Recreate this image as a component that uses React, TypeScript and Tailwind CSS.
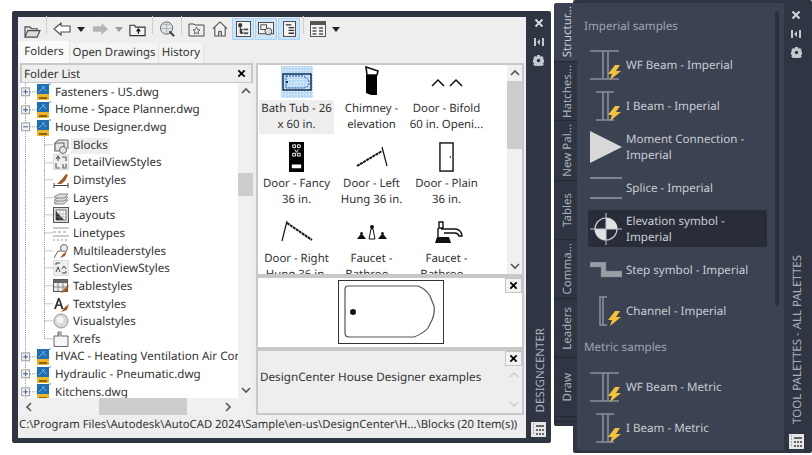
import React from "react";

const font = "font-['Noto_Sans','Open_Sans',sans-serif] [text-rendering:geometricPrecision]";

function CloseX({ className = "" }: { className?: string }) {
  return (
    <svg viewBox="0 0 10 10" className={className}>
      <path d="M1.5 1.5 8.5 8.5M8.5 1.5 1.5 8.5" stroke="currentColor" strokeWidth="2" />
    </svg>
  );
}

function Chevron({ dir, color = "#555" }: { dir: "up" | "down" | "left" | "right"; color?: string }) {
  const d = {
    up: "M1 7 5 3 9 7",
    down: "M1 3 5 7 9 3",
    left: "M7 1 3 5 7 9",
    right: "M3 1 7 5 3 9",
  }[dir];
  return (
    <svg viewBox="0 0 10 10" className="w-[10px] h-[10px]">
      <path d={d} fill="none" stroke={color} strokeWidth="1.6" />
    </svg>
  );
}

function Caret({ color = "#222" }: { color?: string }) {
  return (
    <svg viewBox="0 0 8 5" className="w-[8px] h-[5px] shrink-0">
      <path d="M0 0h8L4 5z" fill={color} />
    </svg>
  );
}

function Sep() {
  return <div className="w-px h-[18px] bg-[#d0d0d0] -mt-2" />;
}

function ToolBtn({ children, on = false }: { children: React.ReactNode; on?: boolean }) {
  return (
    <div className={"w-[22px] h-[22px] flex items-center justify-center shrink-0 " + (on ? "bg-[#cde4f9] border border-[#a8d2f5]" : "")}>
      {children}
    </div>
  );
}

function Toolbar() {
  const s = "#4a4a4a";
  return (
    <div className="h-[24px] flex items-center pl-[6px] shrink-0">
      <svg viewBox="0 0 18 16" className="w-[17px] h-[15px] mt-1">
        <path d="M1 14V3h5l2 2h6v2M1 14l3-7h13l-3 7z" fill="#ddd" stroke={s} strokeWidth="1.2" />
      </svg>
      <div className="w-[5px]" />
      <Sep />
      <div className="w-[6px]" />
      <svg viewBox="0 0 18 14" className="w-[18px] h-[14px]">
        <path d="M1 7 8 1v3h9v6H8v3z" fill="#fff" stroke={s} strokeWidth="1.1" />
      </svg>
      <div className="w-[6px]" />
      <Caret />
      <div className="w-[7px]" />
      <svg viewBox="0 0 18 14" className="w-[17px] h-[14px]">
        <path d="M17 7 10 1v3H1v6h9v3z" fill="#b4b4b4" />
      </svg>
      <div className="w-[6px]" />
      <Caret color="#999" />
      <div className="w-[6px]" />
      <svg viewBox="0 0 18 14" className="w-[17px] h-[14px] mt-[2px]">
        <path d="M1 13V2h5l1 2h10v9z" fill="#f4f4f4" stroke="#333" strokeWidth="1.2" />
        <path d="M10 11V7M8 8.5 10 6l2 2.5" fill="none" stroke="#111" strokeWidth="1.3" />
      </svg>
      <div className="w-[6px]" />
      <Sep />
      <div className="w-[6px]" />
      <svg viewBox="0 0 18 18" className="w-[17px] h-[17px]">
        <circle cx="8" cy="7.5" r="6.500" fill="#dfe5e8" stroke="#666" />
        <path d="M4 4h8M2.500 8h11M8 1.500v12" stroke="#999" strokeWidth=".7" />
        <path d="M11 11l5 5" stroke="#333" strokeWidth="2" />
      </svg>
      <div className="w-[5px]" />
      <Sep />
      <div className="w-[6px]" />
      <svg viewBox="0 0 17 15" className="w-[17px] h-[15px]">
        <path d="M1 14V2h5l1 1h9v11z" fill="#eee" stroke={s} />
        <path d="M8.5 5 9.6 7.5 12 8 10 9.5 10.6 12 8.5 10.6 6.4 12 7 9.5 5 8 7.4 7.5z" fill="none" stroke={s} strokeWidth=".8" />
      </svg>
      <div className="w-[7px]" />
      <svg viewBox="0 0 17 17" className="w-[16px] h-[16px]">
        <path d="M1 8 8.5 1 16 8M3 7v9h11V7" fill="#f2f2f2" stroke={s} strokeWidth="1.1" />
        <path d="M7 16v-5h3v5" fill="#ccc" stroke={s} />
      </svg>
      <div className="w-[4px]" />
      <ToolBtn on>
        <svg viewBox="0 0 16 17" className="w-[15px] h-[16px]">
          <rect x=".5" y=".5" width="15" height="16" fill="#f4f4f4" stroke="#444" />
          <path d="M3 3h3v3H3zM4.5 6v7h3M4.5 9h3" fill="#333" stroke="#333" />
          <rect x="8" y="8" width="5" height="2" fill="#555" />
          <rect x="8" y="12" width="5" height="2" fill="#555" />
        </svg>
      </ToolBtn>
      <div className="w-[1px]" />
      <ToolBtn on>
        <svg viewBox="0 0 17 16" className="w-[16px] h-[15px]">
          <rect x=".5" y=".5" width="16" height="12" fill="#f4f4f4" stroke="#444" />
          <rect x="3" y="3" width="6" height="5" fill="none" stroke="#444" />
          <circle cx="11" cy="10" r="3.6" fill="#ddd" stroke="#444" />
        </svg>
      </ToolBtn>
      <div className="w-[1px]" />
      <ToolBtn on>
        <svg viewBox="0 0 14 17" className="w-[13px] h-[16px]">
          <rect x=".5" y=".5" width="13" height="16" fill="#f4f4f4" stroke="#444" />
          <path d="M3 4h6M6 7h6M6 10h6M6 13h6" stroke="#333" strokeWidth="1.5" />
        </svg>
      </ToolBtn>
      <div className="w-[3px]" />
      <Sep />
      <div className="w-[6px]" />
      <svg viewBox="0 0 16 16" className="w-[16px] h-[16px]">
        <rect x=".5" y=".5" width="15" height="15" fill="#f5f5f5" stroke="#555" />
        <rect x="1" y="1" width="14" height="3" fill="#555" />
        <path d="M2.500 7h4M9 7h4M2.500 10h4M9 10h4M2.500 13h4M9 13h4" stroke="#555" strokeWidth="1.4" />
      </svg>
      <div className="w-[6px]" />
      <Caret />
    </div>
  );
}

function DwgIcon() {
  return (
    <svg viewBox="0 0 14 17" className="w-[14px] h-[17px] shrink-0">
      <rect x="0" y="1" width="12" height="16" fill="#1f6fb2" />
      <rect x="0" y="11" width="12" height="6" fill="#f0b429" />
      <path d="M2 9 8 3M5 3l4 5" stroke="#9fd0f2" strokeWidth=".7" />
      <path d="M2 15h8" stroke="#5a4200" strokeWidth="1.4" />
      <rect x="12" y="0" width="2" height="2" fill="#9fc6e6" />
    </svg>
  );
}

const g = "#5f6368";

const childIcons: Record<string, React.ReactNode> = {
  Blocks: (
    <g fill="#e4e4e4" stroke={g}>
      <path d="M2 14V6l3-3h10v9" />
      <rect x="2" y="6" width="9" height="8" />
      <circle cx="10" cy="13" r="3.5" />
    </g>
  ),
  DetailViewStyles: (
    <g fill="none" stroke={g} strokeWidth="1.2">
      <rect x=".5" y=".5" width="15" height="15" fill="#eee" stroke="#ddd" />
      <path d="M3 5 5 2 7 5M5 2v5M9 3h4v4M3 9v5h4M10 10v4h3v-4" />
    </g>
  ),
  Dimstyles: (
    <g>
      <path d="M1 11v5M15 11v5M1 13.5h14" stroke="#444" fill="none" />
      <path d="M4 12 9 7l4-5 2 1-3 6-4 3z" fill="#a35a26" />
    </g>
  ),
  Layers: (
    <g fill="#ddd" stroke="#8a8a8a">
      <path d="M1 13 6 10h9l-4 4H2z" />
      <path d="M1 10 6 7h9l-4 4H2z" />
      <path d="M1 7 6 4h9l-4 4H2z" />
    </g>
  ),
  Layouts: (
    <g>
      <rect x=".5" y=".5" width="15" height="15" fill="#ddd" stroke="#555" />
      <path d="M3 3h10v10H3z" fill="#fff" stroke="#777" />
      <path d="M3 13V4l8 9z" fill="#333" />
      <path d="M7 3v10M10 3v10M3 7h10M3 10h10" stroke="#888" strokeWidth=".5" />
    </g>
  ),
  Linetypes: (
    <path d="M0 3h16M0 7h3M5 7h3M10 7h3M0 11h16M0 15h2M4 15h2M8 15h2M12 15h2" stroke="#9a9a9a" strokeWidth="1.2" />
  ),
  Multileaderstyles: (
    <g fill="none" stroke="#666">
      <path d="M1 15 5 8h4" />
      <circle cx="11" cy="5" r="3.5" fill="#eee" />
      <path d="M7 15 10 11l4-3-2 5z" fill="#a35a26" stroke="none" />
    </g>
  ),
  SectionViewStyles: (
    <g fill="none" stroke="#444">
      <rect x=".5" y=".5" width="15" height="15" fill="#eee" stroke="#ddd" />
      <path d="M3 3h4M3 3v2M13 13h-4M13 13v-2M3 12l2-5 2 5M9 9l2-3 2 3" />
    </g>
  ),
  Tablestyles: (
    <g>
      <rect x=".5" y="1.5" width="14" height="12" fill="#eee" stroke="#555" />
      <rect x="1" y="2" width="13" height="3" fill="#666" />
      <path d="M5 5v8M10 5v8M1 9h13" stroke="#888" />
      <path d="M8 15 12 10l4-3-2 6z" fill="#a35a26" />
    </g>
  ),
  Textstyles: (
    <g>
      <path d="M1 13 5 2h1.6l4 11H8.4L7.6 10H4L3 13zM4.6 8.5h2.6L5.9 4.6z" fill="#333" />
      <path d="M8 16 12 11l4-3-2 6z" fill="#a35a26" />
    </g>
  ),
  Visualstyles: (
    <g>
      <circle cx="8" cy="8" r="7" fill="#d8d8d8" stroke="#999" />
      <circle cx="7" cy="7" r="3.5" fill="#f4f4f4" />
    </g>
  ),
  Xrefs: (
    <g fill="#f6f6f6" stroke="#666">
      <path d="M1 15.5V5h4V1h3v4h7v10.5z" />
      <path d="M6 2v4" fill="none" />
    </g>
  ),
};

type TreeRow = { label: string; kind: "plus" | "minus" | "child"; last?: boolean; selected?: boolean };

const treeRows: TreeRow[] = [
  { label: "Fasteners - US.dwg", kind: "plus" },
  { label: "Home - Space Planner.dwg", kind: "plus" },
  { label: "House Designer.dwg", kind: "minus" },
  { label: "Blocks", kind: "child", selected: true },
  { label: "DetailViewStyles", kind: "child" },
  { label: "Dimstyles", kind: "child" },
  { label: "Layers", kind: "child" },
  { label: "Layouts", kind: "child" },
  { label: "Linetypes", kind: "child" },
  { label: "Multileaderstyles", kind: "child" },
  { label: "SectionViewStyles", kind: "child" },
  { label: "Tablestyles", kind: "child" },
  { label: "Textstyles", kind: "child" },
  { label: "Visualstyles", kind: "child" },
  { label: "Xrefs", kind: "child", last: true },
  { label: "HVAC - Heating Ventilation Air Conditioning.dwg", kind: "plus" },
  { label: "Hydraulic - Pneumatic.dwg", kind: "plus" },
  { label: "Kitchens.dwg", kind: "plus" },
];

function TreeGutter({ row }: { row: TreeRow }) {
  const dash = { stroke: "#8e8e8e", strokeDasharray: "1 1", fill: "none" };
  if (row.kind === "child") {
    return (
      <svg viewBox="0 0 32 18" className="w-[32px] h-[17.65px] shrink-0" preserveAspectRatio="none">
        <path d="M4.5 0v18" {...dash} />
        <path d={row.last ? "M23.5 0v9h9" : "M23.5 0v18M23.5 9h9"} {...dash} />
      </svg>
    );
  }
  return (
    <svg viewBox="0 0 16 18" className="w-[16px] h-[17.65px] shrink-0">
      <path d="M4.5 0v18M9 9h7" {...dash} />
      <rect x=".5" y="5" width="8" height="8" fill="#f2f2f2" stroke="#9a9a9a" />
      <path d={row.kind === "plus" ? "M2 9h5M4.5 6.5v5" : "M2 9h5"} stroke="#3b5f99" strokeWidth="1" />
    </svg>
  );
}

function Tree() {
  return (
    <div className="flex-1 min-h-0 flex">
      <div className="w-[218px] bg-white overflow-hidden">
        {treeRows.map((row) => (
          <div key={row.label} className="h-[17.65px] flex items-center">
            <div className="w-[1px] shrink-0" />
            <TreeGutter row={row} />
            {row.kind === "child" ? (
              <svg viewBox="0 0 16 16" className="w-[16px] h-[16px] shrink-0 overflow-visible">
                {childIcons[row.label]}
              </svg>
            ) : (
              <DwgIcon />
            )}
            <span
              className={
                "whitespace-nowrap text-[11.6px] leading-[16px] text-[#333] mt-[2px] " +
                (row.selected ? "bg-[#eeeeee] pl-[2px] pr-[2px] ml-[2px]" : "ml-[4px]")
              }
            >
              {row.label}
            </span>
          </div>
        ))}
      </div>
      <div className="w-[15px] bg-[#f0f0f0] flex flex-col items-center justify-between py-[3px]">
        <Chevron dir="up" />
        <div className="w-full h-[23px] bg-[#cdcdcd] mb-[112px]" />
        <Chevron dir="down" />
      </div>
    </div>
  );
}

function Bath({ big = false }: { big?: boolean }) {
  if (big) {
    return (
      <svg viewBox="0 0 106 64" className="w-[106px] h-[64px]">
        <rect x=".5" y=".5" width="105" height="63" fill="#fff" stroke="#333" />
        <path d="M7 9q0-3 3-3h70q8 3 12 10l4 10q1 7-2 14l-4 8q-4 5-14 9H11q-4 0-4-4z" fill="none" stroke="#555" strokeWidth="1.2" />
        <circle cx="15" cy="32" r="3" fill="#111" />
      </svg>
    );
  }
  return (
    <div className="w-[32px] h-[32px] flex items-center bg-[#b9dbf8] bg-[radial-gradient(#ffffff_1px,transparent_1px)] bg-[length:3px_3px]">
      <svg viewBox="0 0 32 18" className="w-[32px] h-[18px]">
        <rect x="2" y="1" width="28" height="16" fill="none" stroke="#08234a" strokeWidth="1.4" />
        <path d="M5 3h17q5 2 6 6t-5 6H5z" fill="none" stroke="#1a4e8c" strokeDasharray="2 1" />
        <circle cx="6" cy="9" r="1" fill="#000" />
      </svg>
    </div>
  );
}

const gridItems: { l1: string; l2: string; icon: React.ReactNode; sel?: boolean }[] = [
  { l1: "Bath Tub - 26", l2: "x 60 in.", icon: <Bath />, sel: true },
  {
    l1: "Chimney -",
    l2: "elevation",
    icon: (
      <svg viewBox="0 0 16 32" className="w-[16px] h-[32px]">
        <path d="M2 1 14 5 13 9H3z" fill="#fff" stroke="#111" strokeWidth="1.6" />
        <path d="M2 9h11v20l-6 0-5-2z" fill="#000" />
      </svg>
    ),
  },
  {
    l1: "Door - Bifold",
    l2: "60 in. Openi...",
    icon: (
      <svg viewBox="0 0 32 10" className="w-[32px] h-[10px]">
        <path d="M1 9 7 3l6 6M19 9l6-6 6 6" fill="none" stroke="#111" strokeWidth="1.5" />
      </svg>
    ),
  },
  {
    l1: "Door - Fancy",
    l2: "36 in.",
    icon: (
      <svg viewBox="0 0 16 32" className="w-[15px] h-[32px]">
        <rect width="16" height="32" fill="#000" />
        <path d="M4 3h3v3H4zM9 3h3v3H9zM6 8l2 3 2-3M4 12h3v3H4zM9 12h3v3H9z" fill="none" stroke="#fff" />
        <rect x="3" y="24" width="10" height="4" fill="#fff" />
      </svg>
    ),
  },
  {
    l1: "Door - Left",
    l2: "Hung 36 in.",
    icon: (
      <svg viewBox="0 0 32 22" className="w-[32px] h-[22px]">
        <path d="M1 20 26 5" stroke="#111" strokeWidth="2" strokeDasharray="3 .6" />
        <path d="M26 1 31 20" stroke="#111" strokeWidth="1.2" />
      </svg>
    ),
  },
  {
    l1: "Door - Plain",
    l2: "36 in.",
    icon: (
      <svg viewBox="0 0 16 32" className="w-[15px] h-[32px]">
        <rect x="1" y="1" width="14" height="30" fill="#fff" stroke="#111" strokeWidth="1.5" />
        <path d="M12 15v2" stroke="#111" />
      </svg>
    ),
  },
  {
    l1: "Door - Right",
    l2: "Hung 36 in.",
    icon: (
      <svg viewBox="0 0 32 22" className="w-[32px] h-[22px]">
        <path d="M6 2 31 19" stroke="#111" strokeWidth="2" strokeDasharray="3 .6" />
        <path d="M6 0 1 20" stroke="#111" strokeWidth="1.2" />
      </svg>
    ),
  },
  {
    l1: "Faucet -",
    l2: "Bathroo...",
    icon: (
      <svg viewBox="0 0 32 16" className="w-[32px] h-[16px]">
        <path d="M13 15l2-10h2l2 10z" fill="#fff" stroke="#111" />
        <circle cx="16" cy="3" r="2" fill="#111" />
        <path d="M1 15l3-4h3l3 4zM22 15l3-4h3l3 4z" fill="#111" />
        <circle cx="5.5" cy="9.5" r="1.5" fill="#111" />
        <circle cx="26.5" cy="9.5" r="1.5" fill="#111" />
      </svg>
    ),
  },
  {
    l1: "Faucet -",
    l2: "Bathroo...",
    icon: (
      <svg viewBox="0 0 32 24" className="w-[32px] h-[24px]">
        <path d="M8 2h4v6h-4zM10 9h14q6 0 7 7h-3q-1-3-4-3H13" fill="#fff" stroke="#111" strokeWidth="1.4" />
        <path d="M4 23l2-6h12l2 6z" fill="#111" />
        <path d="M7 8v9" stroke="#111" strokeWidth="1.4" />
      </svg>
    ),
  },
];

function IconGrid() {
  return (
    <div className="h-[213px] bg-white border-2 border-[#c8c8c8] flex overflow-hidden shrink-0">
      <div className="flex-1 grid grid-cols-[75px_75px_75px] auto-rows-[75px] pl-[1px] overflow-hidden">
        {gridItems.map((it, i) => (
          <div key={i} className="flex flex-col items-center">
            <div className="h-[33px] flex items-center justify-center shrink-0">{it.icon}</div>
            <div className={"mt-[2px] w-full h-[34px] text-center text-[11.4px] leading-[16px] text-[#333] pt-[1px] whitespace-nowrap " + (it.sel ? "bg-[#eeeeee]" : "")}>
              <div>{it.l1}</div>
              <div>{it.l2}</div>
            </div>
          </div>
        ))}
      </div>
      <div className="w-[15px] bg-[#f0f0f0] flex flex-col items-center py-[3px]">
        <Chevron dir="up" />
        <div className="w-full h-[68px] bg-[#cdcdcd] mt-[3px]" />
        <div className="flex-1" />
        <Chevron dir="down" />
      </div>
    </div>
  );
}

function PaneClose() {
  return (
    <div className="w-[17px] h-[15px] bg-[#f2f2f2] border border-[#c4c4c4] flex items-center justify-center text-black">
      <CloseX className="w-[9px] h-[9px]" />
    </div>
  );
}

function SideBar({ label, width }: { label: string; width: string }) {
  return (
    <div className={width + " flex flex-col items-center text-[#c4c8cf]"}>
      <CloseX className="w-[10px] h-[10px] mt-[1px] text-[#d5d8dd]" />
      <svg viewBox="0 0 10 10" className="w-[10px] h-[10px] mt-[9px]">
        <path d="M0 1h2v8H0zM10 1H8v8h2zM3 5l3-3v6z" fill="#c4c8cf" />
      </svg>
      <svg viewBox="0 0 12 12" className="w-[11px] h-[11px] mt-[8px]">
        <path d="M4.500 0h3l.5 2 1.700-1 2 2-1 1.700 2 .5v3l-2 .5 1 1.700-2 2-1.700-1-.5 2h-3l-.5-2-1.700 1-2-2 1-1.700-2-.5v-3l2-.5-1-1.700 2-2 1.700 1z" fill="#c4c8cf" />
        <circle cx="6" cy="6" r="1.800" fill="#2f3542" />
      </svg>
      <div className="flex-1" />
      <div className="[writing-mode:vertical-rl] rotate-180 text-[11.5px] text-[#a9afb9] whitespace-nowrap ml-[4px] mb-[10px]">{label}</div>
      <svg viewBox="0 0 15 15" className="w-[15px] h-[15px] mb-[1px]">
        <rect width="15" height="15" fill="#e6e6e6" />
        <path d="M2 2h1M2 5h1M2 8h1M2 11h1" stroke="#777" />
        <path d="M5 3h8v2H5zM5 7h2v2H5zM8 7h2v2H8zM11 7h2v2h-2zM5 11h2v2H5zM8 11h2v2H8zM11 11h2v2h-2z" fill="#666" />
      </svg>
    </div>
  );
}

function DesignCenter() {
  return (
    <div className={"absolute left-[12px] top-[11px] w-[539px] h-[432px] bg-[#2f3542] rounded-[2px] flex pl-[6px] pt-[6px] pb-[5px] text-[#333] " + font}>
      <div className="w-[508px] bg-[#eeeeee] flex flex-col">
        <Toolbar />
        <div className="h-[22px] flex items-end pl-[1px] shrink-0 text-[11.4px] text-[#333]">
          <div className="w-[50px] h-[22px] bg-[#fafafa] flex items-center justify-center">Folders</div>
          <div className="w-[89px] h-[20px] bg-[#f4f4f4] border-l border-[#e2e2e2] flex items-center justify-center">Open Drawings</div>
          <div className="w-[46px] h-[20px] bg-[#f4f4f4] border-x border-[#e2e2e2] flex items-center justify-center">History</div>
        </div>
        <div className="flex-1 min-h-0 flex pl-[2px] pr-[2px]">
          <div className="w-[233px] flex flex-col">
            <div className="h-[20px] bg-[#eeeeee] border-2 border-[#c8c8c8] border-b flex items-center justify-between pl-[2px] pr-[5px] text-[11.6px] text-[#333] shrink-0">
              <span className="mt-[2px]">Folder List</span>
              <CloseX className="w-[9px] h-[9px] text-black" />
            </div>
            <Tree />
            <div className="h-[17px] bg-[#f0f0f0] flex items-center shrink-0 pl-[4px]">
              <Chevron dir="left" />
              <div className="w-[88px] h-full bg-[#cdcdcd] ml-[65px]" />
              <div className="w-[36px]" />
              <Chevron dir="right" />
            </div>
          </div>
          <div className="w-[3px]" />
          <div className="flex-1 flex flex-col">
            <IconGrid />
            <div className="h-[73px] bg-white border-2 border-[#c8c8c8] flex justify-between pl-[80px] shrink-0">
              <div className="pt-[2px]">
                <Bath big />
              </div>
              <PaneClose />
            </div>
            <div className="flex-1 bg-[#eeeeee] border-2 border-[#c8c8c8] flex justify-between">
              <div className="pl-[2px] pt-[18px] text-[11.7px] text-[#333]">DesignCenter House Designer examples</div>
              <div className="flex flex-col items-center">
                <PaneClose />
                <div className="flex-1 flex flex-col justify-between items-center py-[4px]">
                  <Chevron dir="up" color="#cfcfcf" />
                  <Chevron dir="down" color="#cfcfcf" />
                </div>
              </div>
            </div>
          </div>
        </div>
        <div className="h-[23px] flex items-center text-[11.3px] text-[#333] whitespace-nowrap shrink-0 pl-[1px] pb-[3px]">
          C:\Program Files\Autodesk\AutoCAD 2024\Sample\en-us\DesignCenter\H...\Blocks (20 Item(s))
        </div>
      </div>
      <SideBar label="DESIGNCENTER" width="w-[25px]" />
    </div>
  );
}

function Bolt() {
  return (
    <svg viewBox="0 0 14 15" className="absolute left-[18px] bottom-[1px] w-[14px] h-[15px]">
      <path d="M7 0 0 9h4l-2 6 11-9H8l4-6z" fill="#f3c23c" />
    </svg>
  );
}

function Beam({ wide }: { wide: boolean }) {
  const d = wide
    ? "M0 2h29M0 30h29M13 2v28M18 2v28"
    : "M6 2h18M6 30h18M13 2v28M18 2v28";
  return (
    <div className="relative w-[32px] h-[32px] shrink-0">
      <svg viewBox="0 0 32 32" className="w-[32px] h-[32px]">
        <path d={d} fill="none" stroke="#8b909a" strokeWidth="1.600" />
      </svg>
      <Bolt />
    </div>
  );
}

const items: { icon: React.ReactNode; lines: string[]; hi?: boolean }[] = [
  { icon: <Beam wide />, lines: ["WF Beam - Imperial"] },
  { icon: <Beam wide={false} />, lines: ["I Beam - Imperial"] },
  {
    icon: (
      <svg viewBox="0 0 32 32" className="w-[32px] h-[32px] shrink-0">
        <path d="M0 0 32 16 0 32z" fill="#d9d9d9" />
      </svg>
    ),
    lines: ["Moment Connection -", "Imperial"],
  },
  {
    icon: (
      <svg viewBox="0 0 32 32" className="w-[32px] h-[32px] shrink-0">
        <path d="M0 6h32M0 26h32" stroke="#c4c8cf" />
      </svg>
    ),
    lines: ["Splice - Imperial"],
  },
  {
    icon: (
      <svg viewBox="0 0 32 32" className="w-[32px] h-[32px] shrink-0">
        <circle cx="16" cy="16" r="11" fill="#262b36" stroke="#c4c8cf" strokeWidth="1.200" />
        <path d="M16 5a11 11 0 0 1 11 11H16zM16 27A11 11 0 0 1 5 16h11z" fill="#e2e2e2" />
        <path d="M16 0v32M0 16h32" stroke="#c4c8cf" />
      </svg>
    ),
    lines: ["Elevation symbol -", "Imperial"],
    hi: true,
  },
  {
    icon: (
      <svg viewBox="0 0 32 16" className="w-[32px] h-[16px] shrink-0">
        <path d="M0 0h16v9h16v6H11V5H0z" fill="#9a9ea6" />
        <path d="M0 0h16v9h16v6H11V5H0z" fill="none" stroke="#70747d" strokeDasharray="1 1" />
      </svg>
    ),
    lines: ["Step symbol - Imperial"],
  },
  {
    icon: (
      <div className="relative w-[32px] h-[32px] shrink-0">
        <svg viewBox="0 0 32 32" className="w-[32px] h-[32px]">
          <path d="M17 2H10v28h7M13 2v28" fill="none" stroke="#8b909a" strokeWidth="1.600" />
        </svg>
        <Bolt />
      </div>
    ),
    lines: ["Channel - Imperial"],
  },
];

const metric = [
  { icon: <Beam wide />, lines: ["WF Beam - Metric"] },
  { icon: <Beam wide={false} />, lines: ["I Beam - Metric"] },
];

function PaletteItem({ icon, lines, hi }: { icon: React.ReactNode; lines: string[]; hi?: boolean }) {
  return (
    <div className="h-[41px] flex items-center">
      <div className={"w-[179px] h-[37px] -ml-[1px] pl-[1px] flex items-center rounded-[2px] " + (hi ? "bg-[#282d39]" : "")}>
        <div className="w-[32px] flex justify-center shrink-0 ml-[1px]">{icon}</div>
        <div className="ml-[4px] mt-[2px] text-[11.6px] leading-[16px] text-[#c9cdd4] whitespace-nowrap">
          {lines.map((l) => (
            <div key={l}>{l}</div>
          ))}
        </div>
      </div>
    </div>
  );
}

const tabNames = ["Structur...", "Hatches...", "New Pal...", "Tables", "Comma...", "Leaders", "Draw"];

function ToolPalettes() {
  return (
    <>
      <div className={"absolute left-[573px] top-0 w-[239px] h-[453px] bg-[#2f3542] rounded-[2px] flex pt-[3px] pb-[3px] pl-[4px] " + font}>
        <div className="w-[207px] bg-[#3b4251] rounded-[2px] flex relative pl-[12px]">
          <div className="w-[191px]">
            <div className="h-[41px] flex items-center pt-[7px] text-[11.6px] text-[#9ea5b1] -ml-[5px]">Imperial samples</div>
            {items.map((it) => (
              <PaletteItem key={it.lines[0]} {...it} />
            ))}
            <div className="h-[35px] flex items-center pb-[1px] text-[11.6px] text-[#9ea5b1] -ml-[5px]">Metric samples</div>
            {metric.map((it) => (
              <PaletteItem key={it.lines[0]} {...it} />
            ))}
          </div>
          <div className="absolute left-[198px] top-[8px] w-[4px] h-[295px] rounded-full bg-[#2a2f3b]" />
        </div>
        <div className="flex-1 pt-[6px] pr-[4px] flex">
          <SideBar label="TOOL PALETTES - ALL PALETTES" width="w-full" />
        </div>
      </div>
      <div className={"absolute left-[554px] top-[3px] w-[23px] flex flex-col bg-[#232833] rounded-l-[3px] gap-px " + font}>
        {tabNames.map((t, i) => (
          <div key={t} className={"h-[58.200px] rounded-l-[3px] flex items-center justify-center pl-[4px] " + (i === 0 ? "bg-[#3b4251]" : "bg-[#2f3542]")}>
            <span className={"[writing-mode:vertical-rl] rotate-180 text-[11.5px] whitespace-nowrap " + (i === 0 ? "text-[#c9cdd4]" : "text-[#a9afb9]")}>{t}</span>
          </div>
        ))}
        <div className="h-[4px] bg-[#2f3542] rounded-l-[2px]" />
        <div className="h-[4px] bg-[#2f3542] rounded-l-[2px]" />
      </div>
    </>
  );
}

export default function App() {
  return (
    <div className="relative w-[812px] h-[455px] bg-white overflow-hidden">
      <DesignCenter />
      <ToolPalettes />
    </div>
  );
}
